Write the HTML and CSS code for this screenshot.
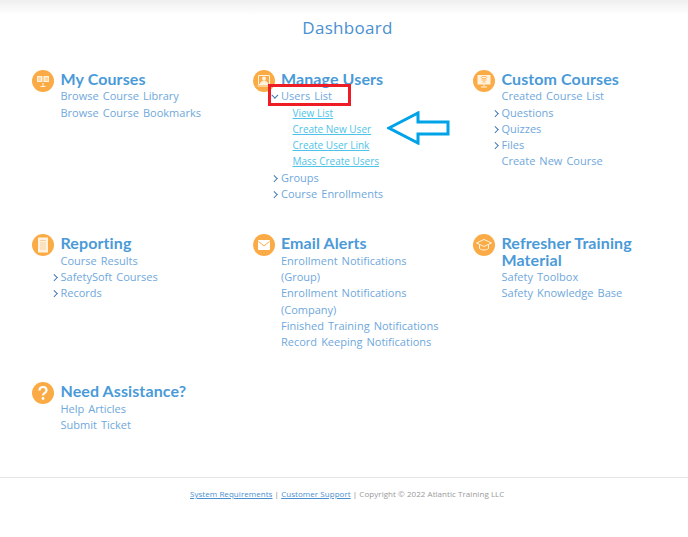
FILE: index.html
```html
<!DOCTYPE html>
<html lang="en">
<head>
<meta charset="utf-8">
<title>Dashboard</title>
<link rel="stylesheet" href="styles.css">
</head>
<body>
<div class="topshade"></div>
<h1 class="title">Dashboard</h1>
<main class="grid">
  <section class="card">
    <svg class="icon" viewBox="0 0 22 22"><circle cx="11" cy="11" r="11" fill="#fbab45"/><path d="M5 6h5.500v6H5zM11.500 6H17v6h-5.500z" fill="#fff3e0"/><path d="M6 8h3M6 10h3M13 8h3M13 10h3" stroke="#fbab45" stroke-width=".8"/><path d="M11 13v3M8.500 16.500h5" stroke="#fff3e0"/></svg>
    <div class="body">
      <h2>My Courses</h2>
      <ul>
        <li><a>Browse Course Library</a></li>
        <li><a>Browse Course Bookmarks</a></li>
      </ul>
    </div>
  </section>
  <section class="card">
    <svg class="icon" viewBox="0 0 22 22"><circle cx="11" cy="11" r="11" fill="#fbab45"/><path d="M5.500 5.500h11v9h-11z" fill="none" stroke="#fff3e0"/><circle cx="11" cy="8.500" r="2" fill="#fff3e0"/><path d="M7.500 14c0-4 7-4 7 0zM4.500 16h13" fill="#fff3e0" stroke="#fff3e0"/></svg>
    <div class="body">
      <h2>Manage Users</h2>
      <ul>
        <li class="open"><a>Users List</a>
          <ul class="sub">
            <li><a>View List</a></li>
            <li><a>Create New User</a></li>
            <li><a>Create User Link</a></li>
            <li><a>Mass Create Users</a></li>
          </ul>
        </li>
        <li class="more"><a>Groups</a></li>
        <li class="more"><a>Course Enrollments</a></li>
      </ul>
    </div>
  </section>
  <section class="card">
    <svg class="icon" viewBox="0 0 22 22"><circle cx="11" cy="11" r="11" fill="#fbab45"/><path d="M4.500 5h13v9.500h-13z" fill="#fff3e0"/><ellipse cx="11" cy="7.500" rx="2.800" ry="1.200" fill="none" stroke="#fbab45" stroke-width=".8"/><path d="M8.500 10h5M9.500 12h3" stroke="#fbab45" stroke-width=".9"/><path d="M11 14.500v2M8 17h6" stroke="#fff3e0"/></svg>
    <div class="body">
      <h2>Custom Courses</h2>
      <ul>
        <li><a>Created Course List</a></li>
        <li class="more"><a>Questions</a></li>
        <li class="more"><a>Quizzes</a></li>
        <li class="more"><a>Files</a></li>
        <li><a>Create New Course</a></li>
      </ul>
    </div>
  </section>
  <section class="card">
    <svg class="icon" viewBox="0 0 22 22"><circle cx="11" cy="11" r="11" fill="#fbab45"/><path d="M6 3.500h10v15H6z" fill="#fff3e0"/><path d="M8 6.500h6M8 9h6M8 11h6M8 13h6M8 15h6" stroke="#f5c78c" stroke-width=".8"/></svg>
    <div class="body">
      <h2>Reporting</h2>
      <ul>
        <li><a>Course Results</a></li>
        <li class="more"><a>SafetySoft Courses</a></li>
        <li class="more"><a>Records</a></li>
      </ul>
    </div>
  </section>
  <section class="card">
    <svg class="icon" viewBox="0 0 22 22"><circle cx="11" cy="11" r="11" fill="#fbab45"/><path d="M5 7a1 1 0 0 1 1-1h10a1 1 0 0 1 1 1v8a1 1 0 0 1-1 1H6a1 1 0 0 1-1-1z" fill="#fff"/><path d="M5.500 7.500 11 12l5.500-4.500" fill="none" stroke="#fbab45" stroke-width="1"/></svg>
    <div class="body">
      <h2>Email Alerts</h2>
      <ul>
        <li><a>Enrollment Notifications (Group)</a></li>
        <li><a>Enrollment Notifications (Company)</a></li>
        <li><a>Finished Training Notifications</a></li>
        <li><a>Record Keeping Notifications</a></li>
      </ul>
    </div>
  </section>
  <section class="card">
    <svg class="icon" viewBox="0 0 22 22"><circle cx="11" cy="11" r="11" fill="#fbab45"/><path d="M3.500 9 11 5.500 18.500 9 11 12.500z" fill="none" stroke="#fff3e0"/><path d="M6.500 11v3.500c2.500 2 6.500 2 9 0V11" fill="none" stroke="#fff3e0"/></svg>
    <div class="body">
      <h2>Refresher Training Material</h2>
      <ul>
        <li><a>Safety Toolbox</a></li>
        <li><a>Safety Knowledge Base</a></li>
      </ul>
    </div>
  </section>
  <section class="card">
    <svg class="icon" viewBox="0 0 22 22"><circle cx="11" cy="11" r="11" fill="#fbab45"/><path d="M7.500 8.500C7.500 6.300 9 5 11 5s3.500 1.300 3.500 3.200c0 2.800-3.500 2.600-3.500 5.300" fill="none" stroke="#fff" stroke-width="2.200"/><circle cx="11" cy="16.500" r="1.400" fill="#fff"/></svg>
    <div class="body">
      <h2>Need Assistance?</h2>
      <ul>
        <li><a>Help Articles</a></li>
        <li><a>Submit Ticket</a></li>
      </ul>
    </div>
  </section>
</main>
<footer class="footer">
  <a>System Requirements</a> | <a>Customer Support</a> | <span>Copyright © 2022 Atlantic Training LLC</span>
</footer>
<div class="redbox"></div>
<svg class="arrow" viewBox="0 0 64 34"><path d="M2 17 31 2v9h30v12H31v9z" fill="none" stroke="#00a3e8" stroke-width="3"/></svg>
</body>
</html>
```
FILE: styles.css
```css
* { box-sizing: border-box; }
html, body { margin: 0; padding: 0; }
body {
  position: relative;
  height: 537px;
  overflow: hidden;
  background: #fff;
  font-family: "Open Sans", Lato, sans-serif;
  color: #6fa8dc;
}
.topshade {
  height: 15px;
  background: linear-gradient(#efefef, #fff);
}
.title {
  margin: 3px 0 0;
  height: 20px;
  line-height: 20px;
  padding-left: 7px;
  text-align: center;
  font-size: 17px;
  font-weight: 400;
  letter-spacing: .3px;
  color: #4a90d0;
}
.grid {
  display: grid;
  grid-template-columns: repeat(3, 220.5px);
  row-gap: 34px;
  padding: 34px 0 0 32px;
}
.card {
  display: flex;
  align-items: flex-start;
  width: 190px;
}
.icon {
  flex: none;
  width: 22px;
  height: 22px;
  margin-top: -2px;
}
.body {
  margin-left: 6.500px;
  flex: 1;
  min-width: 0;
}
h2 {
  margin: -1px 0 1px;
  font-family: Lato, sans-serif;
  font-size: 16px;
  line-height: 16.300px;
  font-weight: 700;
  color: #4a9ad8;
  letter-spacing: .1px;
}
ul {
  list-style: none;
  margin: 0;
  padding: 0;
}
li {
  position: relative;
  font-size: 11px;
  line-height: 16.300px;
  word-spacing: 1.200px;
  color: #6fa8dc;
}
.more::before, .open::before {
  content: "";
  position: absolute;
  left: -9px;
  top: 6px;
  width: 3.500px;
  height: 3.500px;
  border-top: 1.300px solid #3f78b8;
  border-right: 1.300px solid #3f78b8;
  transform: rotate(45deg);
}
.open::before {
  left: -8px;
  top: 5px;
  transform: rotate(135deg);
}
.sub { padding-left: 11.500px; }
.sub li {
  font-size: 10px;
  word-spacing: 0;
  color: #4fc3e8;
  text-decoration: underline;
}
.footer {
  position: absolute;
  left: 0;
  right: 0;
  top: 477px;
  height: 40px;
  border-top: 1.500px solid #e6e6e6;
  padding-top: 10px;
  padding-left: 190px;
  font-size: 8px;
  line-height: 12px;
  letter-spacing: .05px;
  color: #888;
}
.footer a {
  color: #4a90d0;
  text-decoration: underline;
}
.footer span { color: #999; }
.redbox {
  position: absolute;
  left: 268px;
  top: 84px;
  width: 83px;
  height: 22px;
  border: 3px solid #ee1c25;
}
.arrow {
  position: absolute;
  left: 387px;
  top: 111px;
  width: 64px;
  height: 34px;
}
```
